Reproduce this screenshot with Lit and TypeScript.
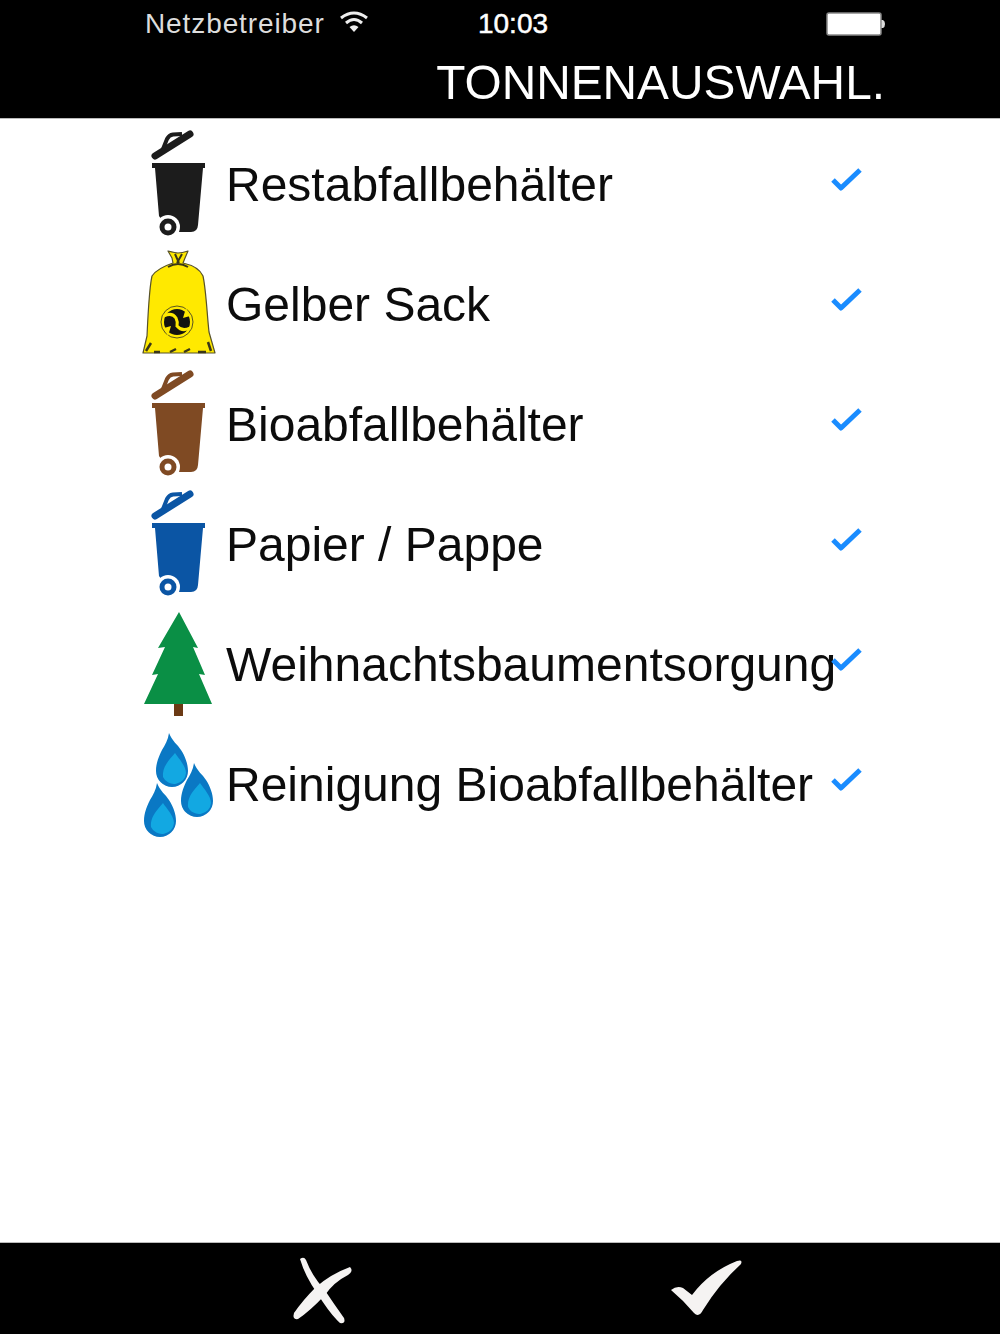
import { LitElement, html, css, svg } from "lit";
import { customElement } from "lit/decorators.js";

const binIcon = (c: string) => svg`
  <svg class="ico" viewBox="0 0 80 120">
    <path d="M15 32 L50 10" stroke=${c} stroke-width="7" stroke-linecap="round" fill="none"/>
    <path d="M23 25 L27 15 Q29 11 33 10.500 L42 10" stroke=${c} stroke-width="4" fill="none" stroke-linejoin="round"/>
    <path d="M12 39 H65 V44 H63 L58 101 Q57.500 108 51 108 H30 L19 92 L15 44 H12 Z" fill=${c}/>
    <circle cx="28" cy="103" r="12" fill="#fff"/>
    <circle cx="28" cy="103" r="8.500" fill=${c}/>
    <circle cx="28" cy="103" r="3.500" fill="#fff"/>
  </svg>`;

const bagIcon = svg`
  <svg class="ico" viewBox="0 0 80 120">
    <path d="M28 7 Q36 9 38 9 Q42 9 48 7 L45 14 L43 19 C 52 21 60 25 63 32 C 66 45 67 70 69 88 L75 109 H3 L7 92 C 8 72 9 45 12 32 C 16 26 24 22 33 19 L32 14 Z"
      fill="#ffe900" stroke="#57522a" stroke-width="1.200" stroke-linejoin="round"/>
    <path d="M28 23 Q38 17 48 23 M35 10 L39 19 M42 10 L37 19" stroke="#3a3618" stroke-width="2" fill="none"/>
    <path d="M6 107 L11 99 M14 108 H20 M30 108 L36 105 M44 108 L50 105 M58 108 H66 M71 107 L68 98" stroke="#3a3618" stroke-width="2.500" fill="none"/>
    <circle cx="37" cy="78" r="16" fill="#ffe900" stroke="#5a5520" stroke-width="1"/>
    <circle cx="37" cy="78" r="13" fill="#141410"/>
    <path d="M24 72 Q32 68 36 74 Q38 78 37 82 Q42 88 50 84" stroke="#ffe900" stroke-width="3" fill="none"/>
    <path d="M46 64 L43 74 L50 72 Z M28 92 L31 82 L24 84 Z" fill="#ffe900"/>
  </svg>`;

const treeIcon = svg`
  <svg class="ico" viewBox="0 0 80 120">
    <rect x="34" y="99" width="9" height="13" fill="#6b3a14"/>
    <path d="M39 8 L58 44 L53 43 L65 71 L59 70 L72 100 H4 L18 70 L12 71 L25 43 L18 44 Z" fill="#0a8f45"/>
  </svg>`;

const drop = (tx: number, ty: number) => svg`
  <g transform="translate(${tx} ${ty})">
    <path d="M-3 -37 C 0 -29 6 -25 9 -20 C 13 -14 16 -6 16 1 A16 16 0 0 1 -16 1 C -16 -7 -13 -14 -10 -20 C -7 -25 -4 -30 -3 -37 Z" fill="#0a78c4"/>
    <path d="M3 -17 C 7 -11 14 -4 14 3 A12 11.500 0 0 1 -9 7 C -10 -3 -3 -10 3 -17 Z" fill="#12a8e2"/>
  </g>`;

const dropsIcon = svg`
  <svg class="ico" viewBox="0 0 80 120">
    ${drop(32, 46)}
    ${drop(57, 76)}
    ${drop(20, 96)}
  </svg>`;

const ROWS = [
  { icon: binIcon("#1c1c1c"), label: "Restabfallbehälter" },
  { icon: bagIcon, label: "Gelber Sack" },
  { icon: binIcon("#7f4a23"), label: "Bioabfallbehälter" },
  { icon: binIcon("#0b55a4"), label: "Papier / Pappe" },
  { icon: treeIcon, label: "Weihnachtsbaumentsorgung" },
  { icon: dropsIcon, label: "Reinigung Bioabfallbehälter" },
];

@customElement("app-root")
export class AppRoot extends LitElement {
  static styles = css`
    :host {
      display: block;
      width: 1000px;
      height: 1334px;
      overflow: hidden;
      background: #fff;
      font-family: "Liberation Sans", Arial, sans-serif;
    }
    .page {
      height: 1334px;
      display: flex;
      flex-direction: column;
      filter: blur(0.7px);
    }
    .header {
      height: 118px;
      background: #000;
      color: #fff;
      border-bottom: 1px solid #bbb;
      display: flex;
      flex-direction: column;
      padding: 0 114px 0 145px;
    }
    .status {
      height: 48px;
      display: grid;
      grid-template-columns: 1fr auto 1fr;
      align-items: center;
    }
    .carrier {
      display: flex;
      align-items: center;
      gap: 14px;
      font-size: 28px;
      letter-spacing: 0.9px;
      color: #ddd;
    }
    .time {
      font-size: 28px;
      -webkit-text-stroke: 0.5px #fff;
      margin-right: 5px;
    }
    .battery {
      justify-self: end;
      display: flex;
      align-items: center;
    }
    .wifi {
      width: 30px;
      height: 22px;
      margin-bottom: 4px;
    }
    .title {
      text-align: right;
      font-size: 47.8px;
      line-height: 70px;
      margin-right: 1px;
      white-space: nowrap;
    }
    .list {
      flex: 1;
      padding: 5px 0 0 140px;
      display: flex;
      flex-direction: column;
    }
    .row {
      height: 120px;
      display: flex;
      align-items: center;
      width: 725px;
    }
    .ico {
      width: 80px;
      height: 120px;
      flex: none;
    }
    .label {
      flex: 1;
      min-width: 0;
      margin-left: 6px;
      font-size: 48px;
      color: #0c0c0c;
      white-space: nowrap;
    }
    .tick {
      width: 36px;
      height: 30px;
      flex: none;
      margin-bottom: 9px;
    }
    .footer {
      height: 92px;
      background: #000;
      border-top: 1px solid #bbb;
      display: flex;
      gap: 307px;
      padding: 9px 0 0 288px;
      box-sizing: border-box;
    }
  `;

  render() {
    return html`
      <div class="page">
        <div class="header">
          <div class="status">
            <div class="carrier">
              <span>Netzbetreiber</span>
              <svg class="wifi" viewBox="0 0 30 22">
                <path d="M2 7 Q15 -3 28 7" stroke="#eee" stroke-width="3" fill="none"/>
                <path d="M7 12 Q15 5 23 12" stroke="#eee" stroke-width="3" fill="none"/>
                <path d="M10.500 16 L15 21 L19.500 16 Q15 12.500 10.500 16 Z" fill="#eee"/>
              </svg>
            </div>
            <div class="time">10:03</div>
            <div class="battery">
              <svg width="60" height="24" viewBox="0 0 60 24">
                <rect x="1" y="1" width="54" height="22" rx="2" fill="#fff" stroke="#888" stroke-width="1.500"/>
                <path d="M55.500 8 H57 Q59 9 59 12 Q59 15 57 16 H55.500 Z" fill="#ddd"/>
              </svg>
            </div>
          </div>
          <div class="title">TONNENAUSWAHL.</div>
        </div>
        <div class="list">
          ${ROWS.map(
            (r) => html`
              <div class="row">
                ${r.icon}
                <span class="label">${r.label}</span>
                <svg class="tick" viewBox="0 0 36 30">
                  <path d="M4 15 L12 23 L31 5" stroke="#1a8cff" stroke-width="5" fill="none" stroke-linejoin="round"/>
                </svg>
              </div>
            `
          )}
        </div>
        <div class="footer">
          <svg width="70" height="80" viewBox="0 0 70 80">
            <path d="M12 7 Q16 4 18 8 Q24 24 36 37 Q46 52 56 66 Q58 72 52 71 Q42 62 29 41 Q17 24 12 7Z" fill="#f5f3f2"/>
            <path d="M62 15 Q66 19 60 23 Q46 30 37 43 Q22 59 10 67 Q4 68 6 61 Q15 48 28 35 Q43 22 62 15Z" fill="#f5f3f2"/>
          </svg>
          <svg width="80" height="80" viewBox="0 0 80 80">
            <path d="M6 38 Q12 33 18 36 L27 43 Q44 20 72 9 Q78 7 76 12 Q54 32 38 58 Q34 66 29 61 Q18 48 6 38Z" fill="#f5f3f2"/>
          </svg>
        </div>
      </div>
    `;
  }
}
